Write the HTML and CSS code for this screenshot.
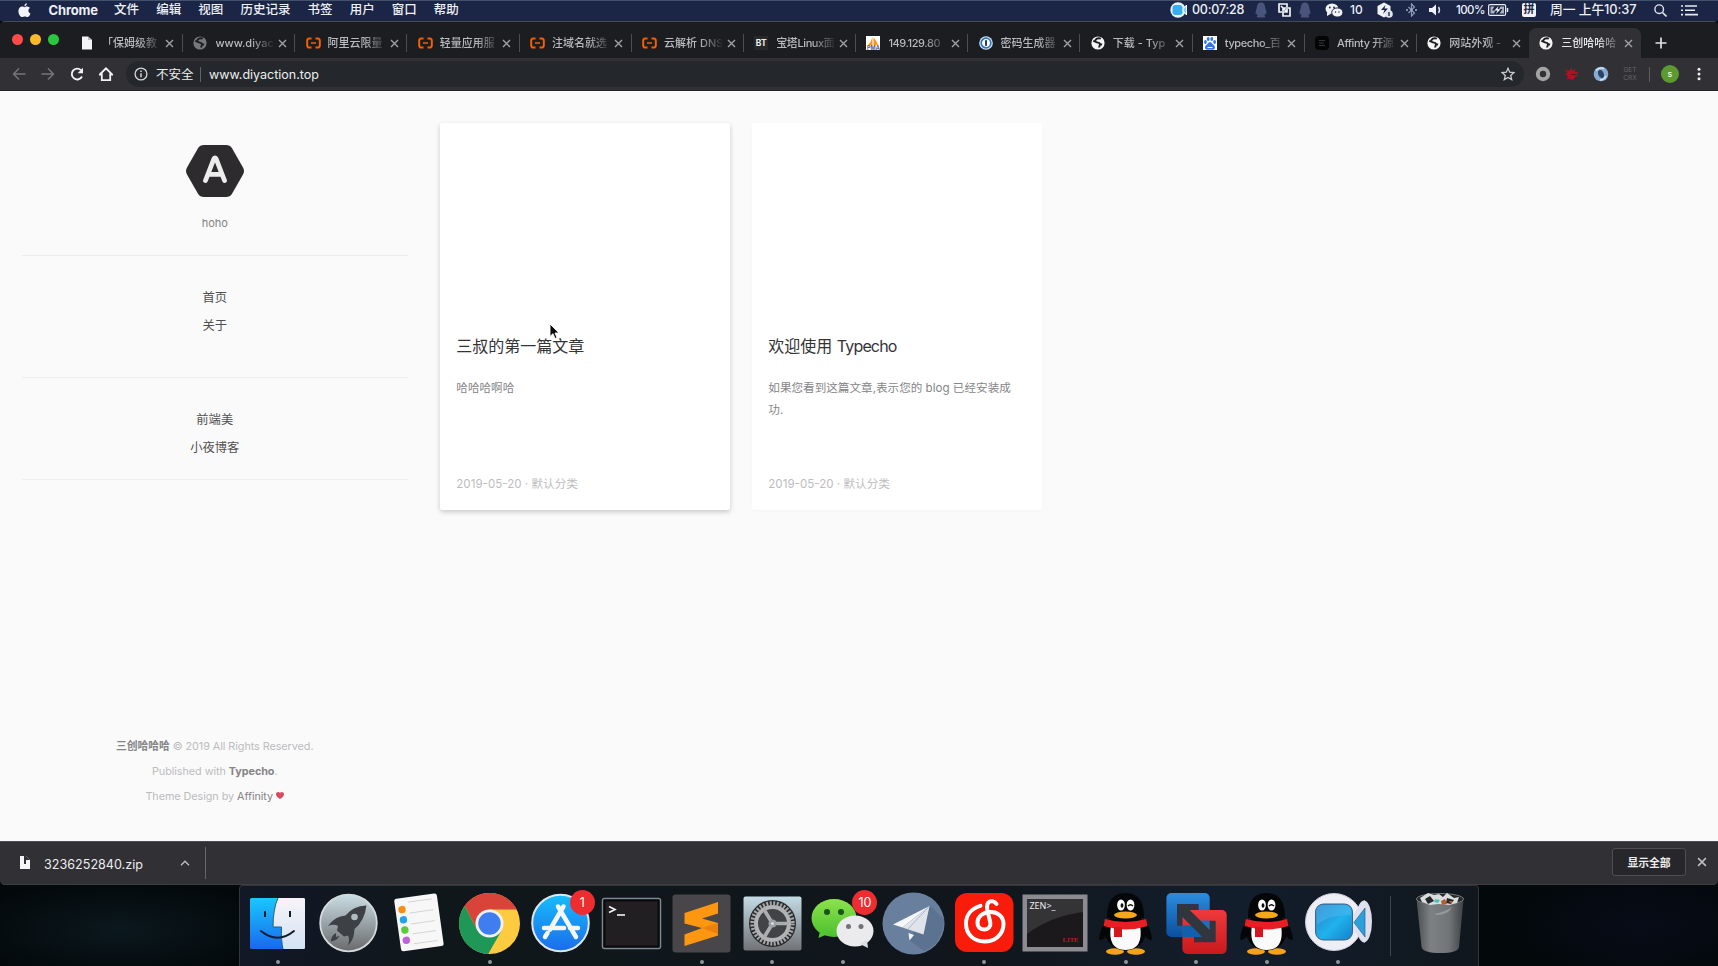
FILE: index.html
```html
<!DOCTYPE html>
<html lang="zh-CN">
<head>
<meta charset="utf-8">
<title>三创哈哈哈</title>
<link rel="stylesheet" href="styles.css">
</head>
<body>
<svg class="defs" width="0" height="0">
  <defs>
    <linearGradient id="gFinder" x1="0" y1="0" x2="0" y2="1"><stop offset="0" stop-color="#19c8fd"/><stop offset="1" stop-color="#1a68ee"/></linearGradient>
    <linearGradient id="gFace" x1="0" y1="0" x2="0" y2="1"><stop offset="0" stop-color="#f7f4f8"/><stop offset="1" stop-color="#d4e2f3"/></linearGradient>
    <linearGradient id="gLaunch" x1="0" y1="0" x2="0" y2="1"><stop offset="0" stop-color="#c9dde4"/><stop offset="1" stop-color="#6a6a6c"/></linearGradient>
    <linearGradient id="gStore" x1="0" y1="0" x2="0" y2="1"><stop offset="0" stop-color="#17bdfb"/><stop offset="1" stop-color="#1b6cec"/></linearGradient>
    <linearGradient id="gPrefs" x1="0" y1="0" x2="0" y2="1"><stop offset="0" stop-color="#c4dbe5"/><stop offset="1" stop-color="#717377"/></linearGradient>
    <linearGradient id="gWe" x1="0" y1="0" x2="0" y2="1"><stop offset="0" stop-color="#8ce24c"/><stop offset="1" stop-color="#4cc02e"/></linearGradient>
    <linearGradient id="gBlue" x1="0" y1="0" x2="0" y2="1"><stop offset="0" stop-color="#2b8de0"/><stop offset="1" stop-color="#0a4f9d"/></linearGradient>
    <linearGradient id="gRed" x1="0" y1="0" x2="0" y2="1"><stop offset="0" stop-color="#ef3a3c"/><stop offset="1" stop-color="#c9191d"/></linearGradient>
    <linearGradient id="gCam" x1="0" y1="0" x2="1" y2="1"><stop offset="0" stop-color="#2c7fc4"/><stop offset=".55" stop-color="#1fb2ec"/><stop offset="1" stop-color="#1480c9"/></linearGradient>
    <linearGradient id="gTrash" x1="0" y1="0" x2="1" y2="0"><stop offset="0" stop-color="#4b4e51"/><stop offset=".3" stop-color="#7d8184"/><stop offset=".7" stop-color="#707477"/><stop offset="1" stop-color="#3f4245"/></linearGradient>
    <symbol id="globe" viewBox="0 0 14 14"><circle cx="7" cy="7" r="6.600" fill="currentColor"/><path d="M9.800 2.600C7 1.700 4 3 4.300 5.200c.3 1.900 3.700 1 4.500 2.300.7 1.200-.8 2.100-.5 4M4.200 5.500 2.300 4.800M8.500 8.100l2.600.4" fill="none" stroke="#1c1d20" stroke-width="1.900"/></symbol>
    <symbol id="aliyun" viewBox="0 0 15 12"><path d="M5.500 1.500H3.400Q1.200 1.500 1.200 3.600v4.800q0 2.100 2.200 2.100h2.100M9.500 1.500h2.100q2.200 0 2.200 2.100v4.800q0 2.100-2.200 2.100H9.500" fill="none" stroke="#ee5f0c" stroke-width="2"/><path d="M5 6h5" stroke="#ee5f0c" stroke-width="1.600"/></symbol>
    <symbol id="close" viewBox="0 0 9 9"><path d="M1 1l7 7M8 1 1 8" stroke="currentColor" stroke-width="1.400"/></symbol>
    <symbol id="qqmini" viewBox="0 0 12 16"><path d="M6 .5C3 .5 1.800 3 1.800 6 .8 8.500.2 10.500.8 12.500l1-.8.8 1.800c-.9.500-1.200 2 0 2h6.800c1.200 0 .9-1.500 0-2l.8-1.800 1 .8c.6-2 0-4-1-6.500C10.200 3 9 .5 6 .5z" fill="#49557c"/></symbol>
    <symbol id="qq" viewBox="0 0 71 81">
      <ellipse cx="25" cy="66.500" rx="9" ry="3.200" fill="#f5a31b"/><ellipse cx="46" cy="66.500" rx="9" ry="3.200" fill="#f5a31b"/>
      <path d="M16 35C10 44 8 55 10 55c4 0 7-5 9-10zM55 35c6 9 8 20 6 20-4 0-7-5-9-10z" fill="#050607"/>
      <ellipse cx="35.500" cy="46" rx="20.500" ry="19.500" fill="#050607"/>
      <path d="M35.500 8C21 8 17 19 17 33h37C54 19 50 8 35.500 8z" fill="#050607"/>
      <path d="M21 40q14.500 5 29 0 4 25-14.500 25T21 40z" fill="#fafafa"/>
      <ellipse cx="31" cy="20" rx="3.900" ry="5.600" fill="#fff"/><ellipse cx="40.500" cy="20" rx="3.900" ry="5.600" fill="#fff"/>
      <ellipse cx="32" cy="20.500" rx="1.400" ry="2.200" fill="#111"/><path d="M38 21q2.500-2.500 5 0" fill="none" stroke="#111" stroke-width="1.500"/>
      <ellipse cx="35.500" cy="30" rx="11.500" ry="3.500" fill="#f6a81d"/>
      <path d="M15 34q20.500 6 41 0l1.500 7Q36 48 13.500 41z" fill="#e71f24"/><path d="M24 42h8v10h-8z" fill="#d5161c"/>
    </symbol>
  </defs>
</svg>

<header class="menubar">
  <svg class="apple" width="13" height="15" viewBox="0 0 13 15"><path d="M8.900.3c.1 1.500-1 2.900-2.500 3C6.200 1.800 7.500.5 8.900.3zM6.500 4.200c.7 0 1.500-.7 2.800-.6 1.100.1 2 .5 2.600 1.400-2.200 1.400-1.800 4.600.6 5.500-.6 1.600-1.700 3.600-3.100 3.600-1 0-1.400-.6-2.600-.6s-1.700.6-2.600.6C2.300 14.100.4 11 .4 8.200c0-2.900 1.800-4.500 3.600-4.600 1.200 0 1.900.6 2.500.6z" fill="#f4f5fa"/></svg>
  <nav class="menus"><b>Chrome</b><span>文件</span><span>编辑</span><span>视图</span><span>历史记录</span><span>书签</span><span>用户</span><span>窗口</span><span>帮助</span></nav>
  <div class="status">
    <svg width="18" height="16" viewBox="0 0 18 16"><circle cx="8" cy="8" r="7.700" fill="#e9f2fa"/><rect x="2.500" y="3" width="10" height="10" rx="3" fill="#37aeee"/><path d="M12.500 8l4-5v10z" fill="#7fd0f6" stroke="#fff"/></svg>
    <span class="time">00:07:28</span>
    <svg class="pen1" width="12" height="16"><use href="#qqmini"/></svg>
    <svg class="copy" width="13" height="14" viewBox="0 0 13 14"><path d="M4 9H1V1h8v3M5 5h7v8H5zM3 3l6 6M9 6v3H6" fill="none" stroke="#f1f3f8" stroke-width="1.700"/></svg>
    <svg class="pen2" width="12" height="16"><use href="#qqmini"/></svg>
    <svg class="wx" width="18" height="15" viewBox="0 0 18 15"><ellipse cx="7" cy="5.800" rx="6.500" ry="5.300" fill="#f1f3f8"/><path d="M2 9v4l3.500-2z" fill="#f1f3f8"/><ellipse cx="12.300" cy="9.500" rx="5.600" ry="4.600" fill="#f1f3f8" stroke="#1b2545"/><circle cx="4.800" cy="4.500" r=".9" fill="#1b2545"/><circle cx="9" cy="4.500" r=".9" fill="#1b2545"/><circle cx="10.500" cy="9" r=".7" fill="#1b2545"/><circle cx="14" cy="9" r=".7" fill="#1b2545"/></svg>
    <span class="ten">10</span>
    <svg class="shield" width="16" height="16" viewBox="0 0 16 16"><path d="M7 .5l6.500 3.600v8L7 15.500.5 12V4.100z" fill="#f1f3f8"/><path d="M8.500 3L4 8h3.500L6 12l5-5.500H7.500z" fill="#1b2545"/><circle cx="12" cy="12" r="3.800" fill="#dfe3ee"/><path d="M12 10v4" stroke="#1b2545" stroke-width="1.300"/></svg>
    <svg class="bt" width="11" height="14" viewBox="0 0 11 14"><path d="M2.500 4l6 6L5.500 13V1l3 3-6 6" fill="none" stroke="#8f99b8" stroke-width="1.200"/><path d="M0 7h2M4.500 7h2M9 7h2" stroke="#a9b1ca" stroke-width="1.600"/></svg>
    <svg class="vol" width="13" height="12" viewBox="0 0 13 12"><path d="M0 4h3l4-3.500v11L3 8H0z" fill="#f1f3f8"/><path d="M9.500 3q2 3 0 6" fill="none" stroke="#dfe3ee" stroke-width="1.400"/></svg>
    <span class="pct">100%</span>
    <svg class="bat" width="21" height="12" viewBox="0 0 21 12"><rect x=".6" y=".6" width="17" height="10.800" rx="1.500" fill="none" stroke="#e8ebf3" stroke-width="1.200"/><path d="M2.500 2.500h4L4 6.500h3.500L6 9.500H2.500zM12.500 2.500H16v7h-4.500l3-4.500h-3.500z" fill="#aab2c8"/><path d="M10.500 2 6.500 6.500h3L8 10l4.500-4.800h-3z" fill="#fff"/><path d="M19.500 4v4" stroke="#e8ebf3" stroke-width="1.500"/></svg>
    <span class="ime">拼</span>
    <span class="clock">周一 上午10:37</span>
    <svg class="search" width="13" height="13" viewBox="0 0 13 13"><circle cx="5.200" cy="5.200" r="4.300" fill="none" stroke="#dfe3ee" stroke-width="1.400"/><path d="M8.500 8.500l4 4" stroke="#dfe3ee" stroke-width="1.600"/></svg>
    <svg class="list" width="17" height="11" viewBox="0 0 17 11"><path d="M0 1h2M0 5.300h2M0 9.600h2M4 1h12M4 5.300h10M4 9.600h13" stroke="#e8ebf3" stroke-width="1.600"/></svg>
  </div>
</header>

<main class="window">
  <div class="tabstrip">
    <div class="lights"><i class="r"></i><i class="y"></i><i class="g"></i></div>
    <div class="tabs">
      <div class="tab first"><svg class="fav" viewBox="0 0 14 14"><path d="M2 .5h6L12 4v9.500H2z" fill="#f3f4f5"/><path d="M8 .5V4h4z" fill="#bbb"/></svg><span>「保姆级教</span><svg class="x"><use href="#close"/></svg></div>
      <div class="tab"><svg class="fav dim"><use href="#globe"/></svg><span>www.diyac</span><svg class="x"><use href="#close"/></svg></div>
      <div class="tab"><svg class="fav ali"><use href="#aliyun"/></svg><span>阿里云限量</span><svg class="x"><use href="#close"/></svg></div>
      <div class="tab"><svg class="fav ali"><use href="#aliyun"/></svg><span>轻量应用服</span><svg class="x"><use href="#close"/></svg></div>
      <div class="tab"><svg class="fav ali"><use href="#aliyun"/></svg><span>注域名就选</span><svg class="x"><use href="#close"/></svg></div>
      <div class="tab"><svg class="fav ali"><use href="#aliyun"/></svg><span>云解析 DNS</span><svg class="x"><use href="#close"/></svg></div>
      <div class="tab"><b class="fav btl">BT</b><span class="tight">宝塔Linux面</span><svg class="x"><use href="#close"/></svg></div>
      <div class="tab"><svg class="fav" viewBox="0 0 14 14"><path d="M0 0h14v14H0z" fill="#fff"/><path d="M6.500 1v8H2Q5 6 6.500 1zM7.500 1.500Q11 5 12 9H7.500z" fill="#f39a1e"/><text x="1" y="14" font-size="5.500" font-weight="700" font-family="Inter" fill="#55588c">PMA</text></svg><span class="tight">149.129.80</span><svg class="x"><use href="#close"/></svg></div>
      <div class="tab"><svg class="fav" viewBox="0 0 14 14"><circle cx="7" cy="7" r="6.800" fill="#dbe7f4"/><circle cx="7" cy="7" r="4.800" fill="#fff" stroke="#2c75ca" stroke-width="1.700"/><rect x="6" y="4" width="2" height="6" rx=".8" fill="#27415f"/></svg><span>密码生成器</span><svg class="x"><use href="#close"/></svg></div>
      <div class="tab"><svg class="fav"><use href="#globe"/></svg><span>下载 - Typ</span><svg class="x"><use href="#close"/></svg></div>
      <div class="tab"><svg class="fav" viewBox="0 0 14 14"><path d="M0 0h14v14H0z" fill="#fff"/><g fill="#3275e4"><ellipse cx="2.400" cy="6" rx="1.400" ry="1.900"/><ellipse cx="5.200" cy="3" rx="1.400" ry="2"/><ellipse cx="8.800" cy="3" rx="1.400" ry="2"/><ellipse cx="11.600" cy="6" rx="1.400" ry="1.900"/><path d="M7 6q1.500 0 3 2.500 3 2 1.500 4.500-1 1-4.500.5-3.500.5-4.500-.5Q1 10.500 4 8.500 5.500 6 7 6z"/></g><path d="M4.500 11.500h5" stroke="#fff"/></svg><span class="tight">typecho_百</span><svg class="x"><use href="#close"/></svg></div>
      <div class="tab"><svg class="fav" viewBox="0 0 14 14"><rect width="14" height="14" rx="4" fill="#050505"/><path d="M4 4.500h6M4 7h5M4 9.500h6" stroke="#33363a"/></svg><span class="tight">Affinty 开源</span><svg class="x"><use href="#close"/></svg></div>
      <div class="tab nosep"><svg class="fav"><use href="#globe"/></svg><span>网站外观 -</span><svg class="x"><use href="#close"/></svg></div>
      <div class="tab active"><svg class="fav"><use href="#globe"/></svg><span>三创哈哈哈</span><svg class="x"><use href="#close"/></svg></div>
    </div>
    <svg class="plus" width="12" height="12" viewBox="0 0 12 12"><path d="M6 .5v11M.5 6h11" stroke="#dfe1e4" stroke-width="1.700"/></svg>
  </div>

  <div class="toolbar">
    <div class="navbtns">
      <svg width="14" height="14" viewBox="0 0 14 14"><path d="M13.500 7H1.500M7 1.500 1.500 7 7 12.500" fill="none" stroke="#74767a" stroke-width="1.500"/></svg>
      <svg width="14" height="14" viewBox="0 0 14 14"><path d="M.5 7h12M7 1.500 12.500 7 7 12.500" fill="none" stroke="#74767a" stroke-width="1.500"/></svg>
      <svg width="14" height="14" viewBox="0 0 14 14"><path d="M12 9.500A5.400 5.400 0 1 1 11 3.200" fill="none" stroke="#f1f2f3" stroke-width="1.900"/><path d="M13 .8v5.400H7.600z" fill="#f1f2f3"/></svg>
      <svg width="14" height="14" viewBox="0 0 14 14"><path d="M.8 7.500 7 1.300l6.200 6.200H11.200v5.700H2.800V7.500z" fill="none" stroke="#f1f2f3" stroke-width="1.800"/></svg>
    </div>
    <div class="omnibox">
      <svg width="14" height="14" viewBox="0 0 14 14"><circle cx="7" cy="7" r="5.900" fill="none" stroke="#d5d7da" stroke-width="1.300"/><path d="M7 6.200v4M7 3.400v1.500" stroke="#d5d7da" stroke-width="1.500"/></svg>
      <span class="insecure">不安全</span><span class="url">www.diyaction.top</span>
      <svg class="star" width="14" height="14" viewBox="0 0 14 14"><path d="M7 1.300l1.700 3.900 4.200.4-3.200 2.800 1 4.200L7 10.400l-3.700 2.200 1-4.200L1.100 5.600l4.200-.4z" fill="none" stroke="#c9cbce" stroke-width="1.300"/></svg>
    </div>
    <div class="exts">
      <svg width="16" height="16" viewBox="0 0 16 16"><circle cx="8" cy="8" r="5.200" fill="none" stroke="#a3a3a3" stroke-width="4"/></svg>
      <svg width="16" height="16" viewBox="0 0 16 16"><path d="M1 3.500l4 1.500 2.500-3L8.500 5l3-2-.5 3 4 .5-3 2 2.500 1L11 11l-2 3-3.500-1-3-1 1.500-2L1 8l2.500-1.500z" fill="#b50f25"/><path d="M7 8.500h5" stroke="#5f1422"/></svg>
      <svg width="16" height="16" viewBox="0 0 16 16"><circle cx="8" cy="8" r="7.300" fill="#85abd2"/><ellipse cx="8" cy="8" rx="2.700" ry="4.200" transform="rotate(-20 8 8)" fill="#2b4260"/><path d="M3 4.500Q6 1 11 2.500M13 10q-2 4-6 4" fill="none" stroke="#d3e3f1" stroke-width="1.500"/></svg>
      <span class="crx">GET<br>CRX</span><i class="sep"></i><span class="avatar">s</span>
      <svg class="dots" width="4" height="14" viewBox="0 0 4 14"><g fill="#eee"><circle cx="2" cy="2.200" r="1.500"/><circle cx="2" cy="7" r="1.500"/><circle cx="2" cy="11.800" r="1.500"/></g></svg>
    </div>
  </div>

  <section class="page">
    <aside class="sidebar">
      <div class="profile">
        <svg width="58" height="52" viewBox="0 0 58 52"><path d="M18 0h22q4 0 6 3.300L57 22.500q2 3.500 0 7L46 48.700Q44 52 40 52H18q-4 0-6-3.300L1 29.500q-2-3.500 0-7L12 3.300Q14 0 18 0z" fill="#2d2b2e"/><path d="M19.500 35.500 27.800 14q1.200-2 2.400 0L38.500 35.500M22.500 29.300h13" fill="none" stroke="#ededee" stroke-width="4.800" stroke-linecap="round" stroke-linejoin="round"/></svg>
        <p>hoho</p>
      </div>
      <nav class="links pages"><a>首页</a><a>关于</a></nav>
      <nav class="links friends"><a>前端美</a><a>小夜博客</a></nav>
      <footer><p class="f1"><b>三创哈哈哈</b> © 2019 All Rights Reserved.</p><p class="f2">Published with <b>Typecho</b>.</p><p class="f3">Theme Design by <em>Affinity</em> <svg width="8" height="7" viewBox="0 0 8 7"><path d="M4 7C1 5 0 3.500 0 2.200 0 .2 2.800-.8 4 1 5.200-.8 8 .2 8 2.200 8 3.500 7 5 4 7z" fill="#d84a5f"/></svg></p></footer>
    </aside>
    <div class="cards">
      <article class="card hover"><h2>三叔的第一篇文章</h2><p>哈哈哈啊哈</p><small>2019-05-20 · 默认分类</small></article>
      <article class="card"><h2>欢迎使用 <span class="lat">Typecho</span></h2><p>如果您看到这篇文章,表示您的 blog 已经安装成功.</p><small>2019-05-20 · 默认分类</small></article>
    </div>
  </section>

  <div class="downloads">
    <svg class="zip" width="10" height="13" viewBox="0 0 10 13"><path d="M0 0h6l4 4v9H0z" fill="#f5f5f6"/><path d="M4 0h2v8H4zM6 0v4h4" fill="#303035"/></svg>
    <span class="file">3236252840.zip</span>
    <svg class="caret" width="10" height="6" viewBox="0 0 10 6"><path d="M1 5.300l4-4 4 4" fill="none" stroke="#bdbec1" stroke-width="1.400"/></svg>
    <i class="sep"></i>
    <button>显示全部</button>
    <svg class="dx" width="10" height="10"><use href="#close"/></svg>
  </div>
</main>

<footer class="desktop">
  <div class="dock">
    <div class="app run"><svg viewBox="0 0 71 81"><rect x="8" y="13" width="55" height="51" rx="1.500" fill="url(#gFinder)"/><path d="M36 13h25.500q1.500 0 1.500 1.500v48q0 1.500-1.500 1.500H41q-2-8-1.500-22H31Q31 24 36 13z" fill="url(#gFace)"/><path d="M36 13Q31 24 31 42h8.500Q39 56 41 64" fill="none" stroke="#23627d" stroke-width="1"/><path d="M23 26v6M48 26v6" stroke="#101c28" stroke-width="2"/><path d="M19 46q16.500 13.500 33 0" fill="none" stroke="#0f1d2e" stroke-width="1.900" stroke-linecap="round"/></svg></div>
    <div class="app"><svg viewBox="0 0 71 81"><circle cx="35.500" cy="38" r="28.300" fill="url(#gLaunch)" stroke="#d5d9db" stroke-width="1.800"/><path d="M53.500 20.500Q40 21 32.500 30.500l-5 1Q21 33 15 41q6-2.500 10 0l-1 4.500 7 6 4-1q2 3.500 0 10 5.500-6 6-12l.5-4.500q10-8 12-23.500z" fill="#3d4044"/><circle cx="41.500" cy="32" r="3.300" fill="#b0bbbf"/><path d="M23 48q-5 2.500-5 8.500 6-1 8.500-5.500l-3.500 1z" fill="#3d4044"/></svg></div>
    <div class="app"><svg viewBox="0 0 71 81"><g transform="rotate(-8 35 38)"><rect x="14.500" y="11" width="43" height="53" rx="2.500" fill="#f7f7f7"/><path d="M28 16h24M28 27h24M28 38h24M28 48h24M28 58h24" stroke="#cfcfcf" stroke-width=".8"/><circle cx="21" cy="22.500" r="3.700" fill="#f98c13"/><circle cx="21" cy="32.800" r="3.700" fill="#23a2ee"/><circle cx="21" cy="43.100" r="3.700" fill="#5dcb37"/><circle cx="21" cy="53.500" r="3.700" fill="#bd62dc"/></g></svg></div>
    <div class="app run"><svg viewBox="0 0 71 81"><circle cx="35.500" cy="38.500" r="30.500" fill="#fccb3f"/><path d="M35.500 24.500h27.200A30.500 30.500 0 0 0 10.700 20.800l12.700 24.700z" fill="#d8433a"/><path d="M10.700 20.800a30.500 30.500 0 0 0 23.500 48.200L47.600 45.500 23.400 45.500z" fill="#1f9756"/><circle cx="35.500" cy="38.500" r="14" fill="#f1f2f3"/><circle cx="35.500" cy="38.500" r="11.200" fill="#407ef0"/></svg></div>
    <div class="app"><svg viewBox="0 0 71 81"><circle cx="35.500" cy="38" r="28.300" fill="url(#gStore)" stroke="#dde7ef" stroke-width="2"/><path d="M38.500 21.500 25 44.500M33 21.500 51 52M19 43h20M45 43h8M22.500 48l-2.500 4" fill="none" stroke="#f3f7fa" stroke-width="4.500" stroke-linecap="round"/></svg><i class="badge">1</i></div>
    <div class="app"><svg viewBox="0 0 71 81"><rect x="7.500" y="13.500" width="58" height="50" rx="2" fill="#221f22" stroke="#7b8a92" stroke-width="1.500"/><rect x="9.500" y="15.500" width="54" height="46" fill="none" stroke="#0b0b0c" stroke-width="2"/><path d="M14 21.500l6 3-6 3" fill="none" stroke="#f3f3f3" stroke-width="1.700"/><path d="M22 30h8" stroke="#f3f3f3" stroke-width="1.600"/></svg></div>
    <div class="app run"><svg viewBox="0 0 71 81"><rect x="6.500" y="9.500" width="58" height="58" rx="3" fill="#484648"/><path d="M18.500 28 52 17v11.500L36 33.500 52 38v12.500L18.500 61V49.500L36 43 18.500 38.500z" fill="#fd9711"/><path d="M36 43 52 49V38z" fill="#e9810c"/></svg></div>
    <div class="app run"><svg viewBox="0 0 71 81"><rect x="6.500" y="11.500" width="58" height="54" rx="2" fill="url(#gPrefs)"/><circle cx="35.500" cy="38.500" r="23.500" fill="#282a2c"/><circle cx="35.500" cy="38.500" r="20.200" fill="none" stroke="#a4a6a8" stroke-width="4" stroke-dasharray="2 1.530"/><circle cx="35.500" cy="38.500" r="16.500" fill="#414345" stroke="#b1b3b5" stroke-width="4"/><path d="M35.500 38.500H52M35.500 38.500 27 24.500M35.500 38.500 27 52.500" stroke="#aaaeb1" stroke-width="3.600"/><circle cx="35.500" cy="38.500" r="4" fill="#9a9fa3"/><circle cx="35.500" cy="38.500" r="1.600" fill="#d8dadc"/></svg></div>
    <div class="app run"><svg viewBox="0 0 71 81"><ellipse cx="27" cy="33" rx="22.500" ry="19" fill="url(#gWe)"/><path d="M13 46l-1.500 7 9-4z" fill="#55c632"/><circle cx="20" cy="27" r="3" fill="#17551d"/><circle cx="34" cy="27" r="3" fill="#17551d"/><ellipse cx="48" cy="46" rx="18.500" ry="15.500" fill="#ebebed"/><path d="M53 59l8 4-1-8z" fill="#ddd"/><circle cx="41.500" cy="41.500" r="2.500" fill="#717376"/><circle cx="54" cy="41.500" r="2.500" fill="#717376"/></svg><i class="badge">10</i></div>
    <div class="app"><svg viewBox="0 0 71 81"><circle cx="35.500" cy="38.500" r="31" fill="#697f9e"/><path d="M52 21l14 13q-1 25-20 32L31 55z" fill="#5c7291"/><path d="M51.500 21 15 39.500l9.500 3z" fill="#f5f6f8"/><path d="M51.500 21 24.500 42.500 45.500 49.500z" fill="#dfe4eb"/><path d="M51.500 21 30 44" stroke="#9fadc0" stroke-width=".8"/><path d="M30.500 48l5.500 2-4.500 5.500z" fill="#f1f3f6"/></svg></div>
    <div class="app run"><svg viewBox="0 0 71 81"><rect x="6" y="8" width="58.500" height="59" rx="12" fill="#f91c0b"/><path d="M31.500 20.800C22 23.500 17 30.500 17 38.500 17 49.500 25 56.500 35.500 56.500S54.500 49.500 54.500 39C54.500 31 48 27 42 27c-8 0-13.500 4.500-13.500 10.500 0 5 3.500 7 6.800 7 4 0 6.700-3 6-7L38.200 24.500C37.200 18 40 15.800 43.500 16.200q2.500.3 4 2.800" fill="none" stroke="#fff" stroke-width="4" stroke-linecap="round"/></svg></div>
    <div class="app"><svg viewBox="0 0 71 81"><rect x="3.500" y="9.500" width="65" height="57" fill="#8d8b92"/><rect x="8" y="14" width="56" height="48" fill="#1b191b"/><path d="M8 14h56v13Q32 31 8 49z" fill="#343336"/><text x="10.500" y="24" font-family="Noto Sans" font-size="9" fill="#ededed" textLength="26">ZEN&gt;_</text><text x="43.500" y="57" font-family="Liberation Serif" font-weight="700" font-size="7" fill="#b81c22" textLength="16">LITE</text></svg></div>
    <div class="app run"><svg><use href="#qq"/></svg></div>
    <div class="app run"><svg viewBox="0 0 71 81"><rect x="5.400" y="8" width="43.300" height="44" rx="5" fill="url(#gBlue)"/><rect x="21.400" y="25" width="44.300" height="44" rx="5" fill="url(#gRed)"/><path d="M21.400 40.500h9L41.500 52H21.400z" fill="#1160ae"/><path d="M39 35.500h9.700V45z" fill="#1a6fc0"/><path d="M16 19h21.700v6h-9l20 20v-9.300h6v21.600H33V52h8.400l-20-20v8.700H16z" fill="#31363e"/></svg></div>
    <div class="app run"><svg><use href="#qq"/></svg></div>
    <div class="app run"><svg viewBox="0 0 71 81"><ellipse cx="62" cy="36.500" rx="8" ry="21" fill="#dcdeec"/><circle cx="32" cy="37" r="28.500" fill="#eeeef6" stroke="#c8cbdc"/><path d="M50 31l8-12q5-4 5-4v43l-13-14z" fill="#dfe1ee"/><rect x="13.500" y="19" width="37" height="36" rx="8" fill="url(#gCam)" stroke="#46607f"/><path d="M52 37.500 63 23v29z" fill="#2aa0dc" stroke="#315f8a" stroke-width=".7"/><path d="M15 40Q25 30 49 30v-4q-1-6-6-6H21q-7 0-7 7z" fill="#59baf0" opacity=".45"/></svg></div>
    <i class="dsep"></i>
    <div class="app trash"><svg viewBox="0 0 71 81"><path d="M11.500 14q24 8 47 0L54 62q-1 6-18.500 6T16.500 62z" fill="url(#gTrash)"/><ellipse cx="35" cy="14" rx="23.500" ry="5.500" fill="#26282a" stroke="#767a7d"/><path d="M15 13l8-5 6 2 5-1 4 3 4-4 7 5 5-1-2 6-8 2-10-1-9 1-8-3z" fill="#dadcdd"/><path d="M20 14l5-3 4 5-6 3zM42 13l7 2-3 4-5-1z" fill="#26282c"/><path d="M30 14l5 1-2 3-4-1z" fill="#4ec3bd"/><path d="M36 16l4-2 2 5-5 1zM44 16l4 0-2 3z" fill="#b5592f"/><path d="M29 29q11-2 18-7-4 8-15 8z" fill="#a3a7aa" opacity=".7"/></svg></div>
  </div>
</footer>
<svg class="cursor" width="12" height="17" viewBox="0 0 12 17"><path d="M1 1v12.500l3-2.800 2 4.800 2-.9-2-4.600h4z" fill="#0b0b0b" stroke="#fff" stroke-width=".9"/></svg>
</body>
</html>
```

FILE: styles.css
```css
* { box-sizing: border-box; }
body {
  margin: 0; width: 1718px; height: 966px; overflow: hidden; position: relative;
  display: flex; flex-direction: column; background: #05090c;
  font-family: Inter, "Noto Sans CJK SC", sans-serif;
}
svg { display: block; flex: none; }
p, h2 { margin: 0; font-weight: 400; }
.defs { position: absolute; }

.menubar { height: 21px; flex: none; display: flex; align-items: center; background: #1b2545; border-top: 1px solid #42506b; color: #eef0f7; font-size: 12.500px; padding: 0 0 2px 18px; white-space: nowrap; line-height: 18px; }
.menus { display: flex; gap: 17.100px; margin-left: 17.500px; font-weight: 500; }
.menus b { width: 48.500px; font-size: 13px; letter-spacing: -.15px; }
.status { margin-left: auto; margin-right: 20px; display: flex; align-items: center; font-weight: 500; }
.time { width: 54px; margin-left: 4px; font-size: 12.500px; letter-spacing: -.2px; }
.pen1 { margin-left: 9px; } .copy { margin-left: 11px; } .pen2 { margin-left: 8px; }
.wx { margin-left: 14px; }
.ten { width: 14px; margin-left: 7px; font-size: 12px; }
.shield { margin-left: 13px; } .bt { margin-left: 13px; } .vol { margin-left: 12px; }
.pct { width: 28px; margin-left: 14px; font-size: 11.500px; letter-spacing: -.55px; }
.bat { margin-left: 4px; }
.ime { width: 14px; height: 14px; margin-left: 13px; background: #f1f3f8; color: #1b2545; border-radius: 2px; font-size: 11px; line-height: 13px; text-align: center; font-weight: 700; }
.clock { width: 88px; margin-left: 14px; font-size: 12.800px; letter-spacing: -.1px; }
.search { margin-left: 16px; } .list { margin-left: 14px; }

.window { height: 864px; flex: none; display: flex; flex-direction: column; border-radius: 5px; overflow: hidden; background: #303035; }
.tabstrip { height: 37px; flex: none; display: flex; align-items: flex-end; background: #1c1d20; border-top: 1px solid #494a4e; }
.lights { width: 71px; height: 30px; display: flex; gap: 7px; padding: 6px 0 0 11.500px; }
.lights i { width: 11px; height: 11px; border-radius: 50%; }
.r { background: #fc4b48; } .y { background: #fdb92b; } .g { background: #28c83e; }
.tabs { display: flex; height: 30px; }
.tab { width: 112.170px; display: flex; align-items: center; padding-left: 10.300px; position: relative; color: #b8babe; font-size: 11px; font-weight: 500; }
.tab.first { padding-left: 9px; }
.tab::after { content: ""; position: absolute; right: 0; top: 6px; width: 1px; height: 18px; background: #4c4d51; }
.tab.nosep::after, .tab.active::after { display: none; }
.tab.active { background: #303035; border-radius: 7px 7px 0 0; color: #e6e7e9; }
.fav { width: 14px; height: 14px; color: #f4f4f5; }
.fav.ali { width: 15px; margin-right: -1px; }
.fav.dim { color: #77787b; }
.btl { font-size: 8.500px; line-height: 14px; text-align: center; background: #28272a; color: #eee; }
.tab span { width: 58px; margin-left: 8px; line-height: 18px; white-space: nowrap; -webkit-mask-image: linear-gradient(90deg, #000 62%, rgba(0,0,0,.1)); mask-image: linear-gradient(90deg, #000 62%, rgba(0,0,0,.1)); }
.tab .tight { letter-spacing: -.4px; }
.x { width: 9px; height: 9px; margin-left: 4.500px; color: #a0a2a5; }
.plus { margin: 0 0 9px 14px; }

.toolbar { height: 33px; flex: none; display: flex; align-items: center; padding-left: 12px; border-bottom: 1px solid #232327; }
.navbtns { display: flex; gap: 15px; }
.omnibox { width: 1398px; height: 26px; margin-left: 13px; border-radius: 13px; background: #24282c; display: flex; align-items: center; padding: 0 9px 0 8px; color: #eceded; font-size: 12.500px; }
.insecure { margin-left: 8px; padding-right: 6px; border-right: 1px solid #606367; line-height: 15px; }
.url { margin-left: 8.500px; }
.star { margin-left: auto; }
.exts { display: flex; align-items: center; gap: 13px; margin-left: 11px; }
.crx { width: 16px; font-size: 6.500px; line-height: 8px; color: #66676b; text-align: center; }
.exts .sep { width: 1px; height: 15px; background: #5b5c60; margin: 0 -2px 0 -2px; }
.avatar { width: 18px; height: 18px; border-radius: 50%; background: #5c9a2f; color: #fff; font-size: 9px; line-height: 17px; text-align: center; }
.dots { margin-left: 5px; }

.page { height: 750px; flex: none; background: #fafafa; display: flex; }
.sidebar { width: 408px; margin-right: 32px; padding-left: 21.500px; display: flex; flex-direction: column; text-align: center; }
.profile { height: 165px; padding-top: 54px; border-bottom: 1px solid #ececec; display: flex; flex-direction: column; align-items: center; color: #828282; font-size: 11px; }
.profile p { margin-top: 17px; line-height: 18px; }
.links { display: flex; flex-direction: column; font-size: 12.300px; line-height: 28.500px; color: #505052; border-bottom: 1px solid #eee; padding-top: 27.500px; }
.pages { height: 122px; }
.friends { height: 101.500px; }
.sidebar footer { margin-top: 254.200px; font-size: 10.800px; line-height: 25.200px; color: #bcbcbe; white-space: nowrap; letter-spacing: -.05px; }
.sidebar footer b { color: #858587; } .sidebar footer em { color: #858587; font-style: normal; }
.sidebar footer svg { display: inline; vertical-align: 1px; }
.cards { display: flex; gap: 22px; padding-top: 32px; }
.card { width: 290px; height: 387px; background: #fff; border-radius: 2px; padding: 211px 20px 0 16.300px; box-shadow: 0 1px 2px rgba(0,0,0,.03); display: flex; flex-direction: column; }
.card.hover { box-shadow: 0 2px 5px rgba(0,0,0,.2); }
.card h2 { font-size: 16px; line-height: 24px; color: #343437; }
.card .lat { letter-spacing: -.85px; }
.card p { height: 80px; margin-top: 20px; font-size: 11.600px; line-height: 21.500px; color: #858587; }
.card small { margin-top: 16px; font-size: 11.600px; line-height: 20px; color: #bdbdbf; }

.downloads { height: 44px; flex: none; display: flex; align-items: center; padding-left: 20px; background: #303035; border-bottom: 1px solid #3e3e42; border-top: 1px solid #4c4c50; }
.zip { margin-bottom: 2px; }
.file { width: 98px; margin-left: 14px; margin-top: 3px; font-size: 12.600px; color: #ededee; }
.caret { margin-left: 38px; }
.downloads .sep { width: 1px; height: 32px; margin-left: 15px; background: #66676b; }
.downloads button { width: 74px; height: 28px; margin: 0 0 2px auto; padding: 0; border: 1px solid #4e4f53; border-radius: 3px; background: #27272b; color: #eee; font: 700 10.800px "Noto Sans CJK SC", sans-serif; }
.dx { margin: 0 11px 2px 11px; color: #bdbec1; }

.desktop { flex: 1; padding-left: 239px; background: radial-gradient(ellipse 160px 50px at 120px 45px, #0b181d, transparent), radial-gradient(ellipse 140px 60px at 1640px 40px, #080c18, transparent), #03080b; }
.dock { width: 1240px; height: 81px; padding-left: 2px; display: flex; background: linear-gradient(90deg, #111827, #10171b 15%, #10161b 60%, #131e2d 80%, #10171d); border: 1px solid #323639; border-bottom: 0; border-radius: 4px 4px 0 0; }
.app { width: 70.680px; height: 80px; position: relative; margin-top: -1px; }
.app svg { width: 71px; height: 81px; }
.run::after { content: ""; position: absolute; left: 33.500px; top: 75px; width: 4px; height: 4px; border-radius: 50%; background: #929598; }
.badge { position: absolute; left: 45px; top: 5px; width: 25px; height: 25px; border-radius: 50%; background: #ed2d30; color: #fff; font: 400 12.500px/25px Inter; text-align: center; }
.dsep { width: 1px; height: 60px; margin: 10px 0 0 17px; background: #41464b; }
.trash { margin-left: 14px; }

.cursor { position: absolute; left: 549px; top: 323px; }
```
